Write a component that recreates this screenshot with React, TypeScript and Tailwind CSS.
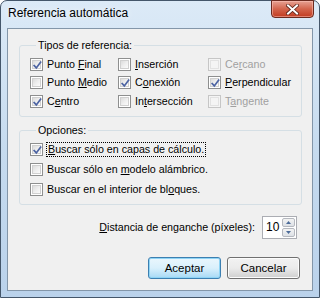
import React from 'react';

type Check = {
  label: string;
  key: number;
  checked?: boolean;
  disabled?: boolean;
  focus?: boolean;
};

const Mnemonic: React.FC<{ label: string; k: number }> = ({ label, k }) => (
  <>
    {label.slice(0, k)}
    <span className="underline underline-offset-[1px]">{label[k]}</span>
    {label.slice(k + 1)}
  </>
);

const Box: React.FC<{ checked?: boolean; disabled?: boolean }> = ({ checked, disabled }) => (
  <div
    className={`relative w-[13px] h-[13px] shrink-0 border ${
      disabled ? 'border-[#c6c6c6] bg-[#f4f4f4]' : 'border-[#8e8f8f] bg-white'
    } p-[1px]`}
  >
    <div
      className={`w-full h-full border ${
        disabled
          ? 'border-[#e2e2e2] bg-[#f4f4f4]'
          : 'border-[#d0d0d0] bg-gradient-to-br from-[#dcdcdc] via-[#eeeeee] to-[#fbfbfb]'
      }`}
    />
    {checked && (
      <svg className="absolute left-[1px] top-[1px]" width="11" height="11" viewBox="0 0 11 11">
        <path d="M2.2 5.6 L4.3 7.9 L8.6 2.2" fill="none" stroke="#4d64a3" strokeWidth="1.7" strokeLinecap="square" />
      </svg>
    )}
  </div>
);

const CheckRow: React.FC<{ c: Check }> = ({ c }) => (
  <div className="flex items-center h-[18px]">
    <Box checked={c.checked} disabled={c.disabled} />
    <span
      className={`ml-[4px] whitespace-nowrap ${c.disabled ? 'text-[#a0a0a0]' : 'text-black'} ${
        c.focus ? 'outline outline-1 outline-dotted outline-black px-[1px]' : ''
      }`}
    >
      <Mnemonic label={c.label} k={c.key} />
    </span>
  </div>
);

const tipos: Check[] = [
  { label: 'Punto Final', key: 6, checked: true },
  { label: 'Inserción', key: 0 },
  { label: 'Cercano', key: 2, disabled: true },
  { label: 'Punto Medio', key: 6 },
  { label: 'Conexión', key: 1, checked: true },
  { label: 'Perpendicular', key: 0, checked: true },
  { label: 'Centro', key: 1, checked: true },
  { label: 'Intersección', key: 2 },
  { label: 'Tangente', key: 1, disabled: true },
];

const opciones: Check[] = [
  { label: 'Buscar sólo en capas de cálculo.', key: 0, checked: true, focus: true },
  { label: 'Buscar sólo en modelo alámbrico.', key: 15 },
  { label: 'Buscar en el interior de bloques.', key: 27 },
];

export default function App() {
  return (
    <div
      className="w-[320px] h-[298px] flex flex-col rounded-t-[7px] border border-[#44566a] bg-gradient-to-b from-[#dceaf7] via-[#c6dbef] to-[#bad2eb] text-[10.7px] leading-[13px]"
      style={{ fontFamily: '"Liberation Sans", Arial, sans-serif' }}
    >
      <div className="h-[27px] flex items-start shrink-0">
        <div className="pl-[7px] pt-[5px] text-[12px] leading-[15px] text-black [text-shadow:0_0_6px_#ffffff]">
          Referencia automática
        </div>
        <div className="ml-auto mr-[5px] -mt-[1px] w-[43px] h-[18px] rounded-b-[4px] border border-[#6b2a1f] bg-gradient-to-b from-[#e6a193] via-[#d3644c] to-[#c13a1f] flex items-center justify-center shadow-[inset_0_0_0_1px_rgba(255,200,190,0.5)]">
          <svg width="13" height="11" viewBox="0 0 13 11">
            <path d="M2 1.5 L11 9.5 M11 1.5 L2 9.5" stroke="#5a2218" strokeWidth="3.6" strokeLinecap="square" />
            <path d="M2 1.5 L11 9.5 M11 1.5 L2 9.5" stroke="#ffffff" strokeWidth="2" strokeLinecap="square" />
          </svg>
        </div>
      </div>

      <div className="mx-[6px] h-[263px] border border-[#8396a9] bg-[#f0f0f0] flex flex-col">
        <fieldset className="ml-[11px] w-[283px] mt-[10px] border border-[#d5dfe5] rounded-[3px] pl-[10px] pt-[3px] pb-[6px]">
          <legend className="ml-[6px] px-[2px] text-black leading-[13px]">Tipos de referencia:</legend>
          <div className="grid grid-cols-[88px_90px_1fr] gap-y-[0.5px]">
            {tipos.map((c) => (
              <CheckRow key={c.label} c={c} />
            ))}
          </div>
        </fieldset>

        <fieldset className="ml-[11px] w-[283px] mt-[7px] border border-[#d5dfe5] rounded-[3px] pl-[10px] pt-[3px] pb-[6px]">
          <legend className="ml-[6px] px-[2px] text-black leading-[13px]">Opciones:</legend>
          <div className="flex flex-col gap-[2px]">
            {opciones.map((c) => (
              <CheckRow key={c.label} c={c} />
            ))}
          </div>
        </fieldset>

        <div className="mt-[11px] mr-[15px] flex items-center justify-end">
          <span className="mr-[7px] text-black">
            <Mnemonic label="Distancia de enganche (píxeles):" k={0} />
          </span>
          <div className="w-[35px] h-[23px] border border-[#abadb3] bg-white flex items-stretch">
            <div className="flex-1 pl-[3px] flex items-center text-[12px] text-black">10</div>
            <div className="w-[13px] my-[1px] mr-[1px] flex flex-col gap-[1px]">
              <div className="flex-1 border border-[#b5b8bf] rounded-[2px] bg-gradient-to-b from-[#f3f3f3] to-[#dde1e6] flex items-center justify-center">
                <svg width="5" height="3" viewBox="0 0 5 3"><path d="M0 3 L2.5 0 L5 3 Z" fill="#4c6b99" /></svg>
              </div>
              <div className="flex-1 border border-[#b5b8bf] rounded-[2px] bg-gradient-to-b from-[#f3f3f3] to-[#dde1e6] flex items-center justify-center">
                <svg width="5" height="3" viewBox="0 0 5 3"><path d="M0 0 L2.5 3 L5 0 Z" fill="#4c6b99" /></svg>
              </div>
            </div>
          </div>
        </div>

        <div className="mt-[18px] mr-[12px] flex justify-end gap-[6px] text-[11.5px]">
          <button className="w-[73px] h-[22px] rounded-[3px] border border-[#3c7fb1] bg-gradient-to-b from-[#eaf6fd] via-[#d9f0fc] to-[#a7d9f5] text-black shadow-[inset_0_0_0_1px_#8fd4f5]">
            Aceptar
          </button>
          <button className="w-[73px] h-[22px] rounded-[3px] border border-[#707070] bg-gradient-to-b from-[#f2f2f2] via-[#ebebeb] to-[#cfcfcf] text-black shadow-[inset_0_0_0_1px_#fcfcfc]">
            Cancelar
          </button>
        </div>
      </div>
    </div>
  );
}
